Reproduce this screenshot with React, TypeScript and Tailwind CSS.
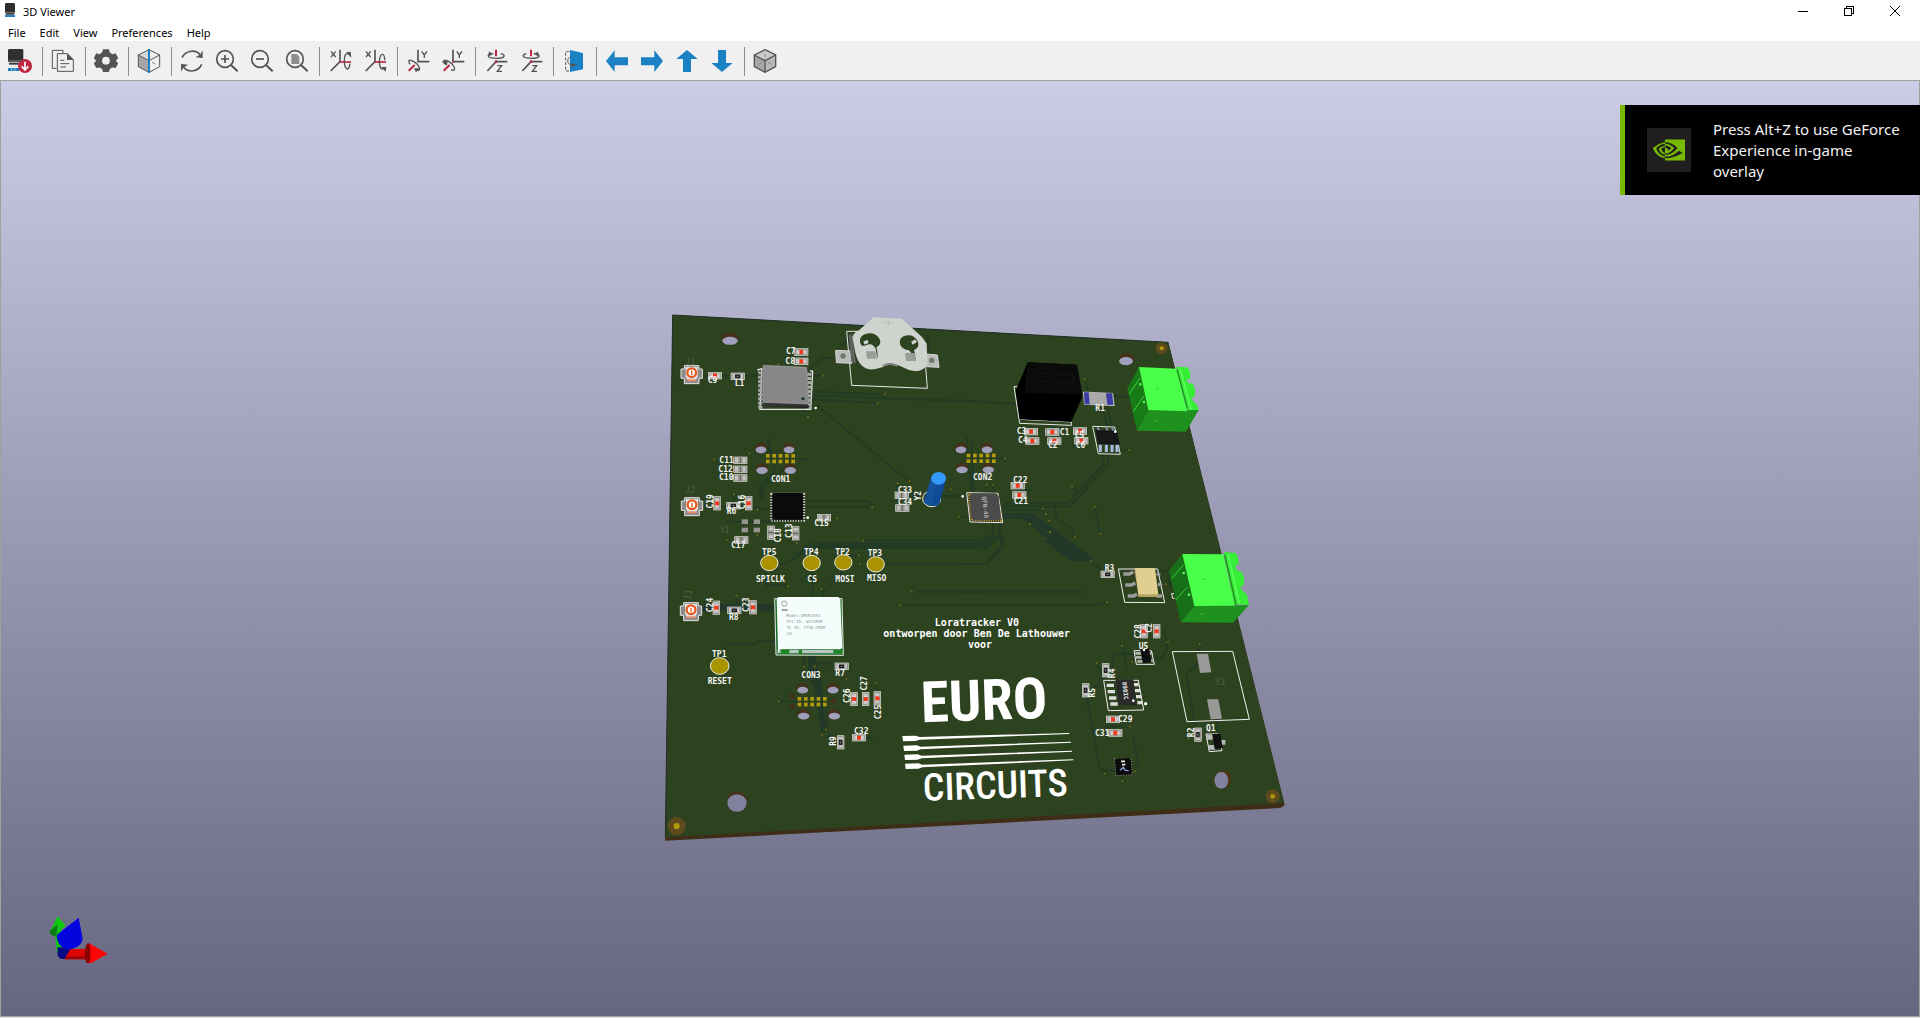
import React from "react";
import { SiNvidia } from "react-icons/si";

const INK = "#545454";
const RED = "#bf2641";
const BLUE = "#1a81c4";

/* ---------- toolbar icons (72-unit grid, shown at 24px) ---------- */

function Glyph({ children }: { children: React.ReactNode }) {
  return (
    <svg viewBox="0 0 72 72" className="size-6" aria-hidden="true" fill="none" stroke={INK} strokeWidth="5">
      {children}
    </svg>
  );
}

const Reload = () => (
  <Glyph>
    <g stroke="none">
      <path d="M3 0h40l3 3v32H0V3z" fill="#2f2f2f" />
      <path d="M0 35h46v4H0z" fill="#555" />
      <path d="M3 41h40v6H3z" fill="#3a3a3a" />
      <path d="M0 57h34v9H0z" fill={BLUE} />
      <path d="M9 48h2v18H9zM20 48h2v18h-2z" fill="#d8d8d8" />
      <circle cx="51" cy="51" r="21" fill={RED} />
    </g>
    <path d="M51 38v24M41 52l10 11 10-11" stroke="#fff" strokeWidth="5" />
  </Glyph>
);

const Copy = () => (
  <Glyph>
    <path d="M16 58H4V4h32v8" strokeWidth="3" />
    <path d="M19 14h30l18 18v35H19z" strokeWidth="3" fill="#f0f0f0" />
    <path d="M48 13l20 20H48z" fill={INK} stroke="none" />
    <path d="M28 34h12M28 44h27M28 54h17" strokeWidth="3" />
  </Glyph>
);

const Gear = () => (
  <Glyph>
    <g fill={INK} stroke="none">
      <path
        fillRule="evenodd"
        d="M27 1h18l3 10 8 5 10-3 8 16-8 7 8 8-8 15-11-2-7 5-3 9H27l-3-9-7-5-11 2-8-15 8-8-8-7 8-16 10 3 8-5zM36 24a12 12 0 1 0 0 24 12 12 0 0 0 0-24z"
        transform="translate(1 0) scale(.97)"
      />
    </g>
  </Glyph>
);

const CubeSplit = () => (
  <Glyph>
    <path d="M4 18L36 35V70L4 53z" fill="#a6a6a6" stroke="none" />
    <path d="M4 18L36 2v33z" fill="#d9d9d9" stroke="none" />
    <path d="M36 2l32 16v35L36 70 4 53V18z" strokeWidth="3" />
    <path d="M4 18l32 17 32-17" strokeWidth="3" />
    <path d="M45 40l10 5" strokeWidth="2" />
    <path d="M36 0v72" stroke={BLUE} strokeWidth="6" />
  </Glyph>
);

const Refresh = () => (
  <Glyph>
    <path d="M6 26C14 8 44 -2 60 17" />
    <path d="M65 46C57 66 26 74 11 55" />
    <path d="M68 4v23l-22-2 12-7 4-4zM3 68V45l22 2-12 7-4 4z" fill={INK} stroke="none" />
  </Glyph>
);

function Lens({ children }: { children: React.ReactNode }) {
  return (
    <Glyph>
      <circle cx="30" cy="30" r="25" strokeWidth="5" />
      <path d="M48 48l20 19" strokeWidth="6" />
      {children}
    </Glyph>
  );
}
const ZoomIn = () => (
  <Lens>
    <path d="M18 30h24M30 18v24" />
  </Lens>
);
const ZoomOut = () => (
  <Lens>
    <path d="M18 30h24" />
  </Lens>
);
const ZoomFit = () => (
  <Lens>
    <path d="M19 15h16l8 8v22H19z" fill="#8e8e8e" stroke="none" />
  </Lens>
);

function RotX({ flip }: { flip?: boolean }) {
  return (
    <Glyph>
      <path d="M9 7l14 17M23 7L9 24" strokeWidth="4" />
      <path d="M36 2v36L8 66" />
      <path d="M36 39h33" stroke={RED} />
      {flip ? (
        <>
          <path d="M65 34C65 12 52 8 49 36 49 52 53 62 60 60" strokeWidth="4" />
          <path d="M54 54h16l-2 14z" fill={INK} stroke="none" />
        </>
      ) : (
        <>
          <path d="M60 16C52 10 48 24 49 40 50 58 62 72 66 44" strokeWidth="4" />
          <path d="M54 10l14-2 2 18z" fill={INK} stroke="none" />
        </>
      )}
    </Glyph>
  );
}

function RotY({ flip }: { flip?: boolean }) {
  return (
    <Glyph>
      <path d="M36 2v36h34" />
      <path d="M47 7l8 11 8-11M55 18v9" strokeWidth="4" />
      <path d="M8 65l18-17" stroke={RED} strokeWidth="6" />
      <path d="M12 46C0 26 22 34 34 46 46 60 40 68 30 62" strokeWidth="4" />
      {flip ? (
        <path d="M2 38l18-6-2 18z" fill={INK} stroke="none" />
      ) : (
        <path d="M24 58l18 0-12 12z" fill={INK} stroke="none" />
      )}
      {flip && <circle cx="36" cy="39" r="3" fill={RED} stroke="none" />}
    </Glyph>
  );
}

function RotZ({ flip }: { flip?: boolean }) {
  return (
    <Glyph>
      <path d="M10 66l26-28h34" />
      <path d="M36 2v20M36 34v8" stroke={RED} strokeWidth="6" />
      <path d="M40 50h13L40 67h14" strokeWidth="4" />
      <path d="M22 14C2 20 16 28 38 28 62 28 68 18 50 14" strokeWidth="4" />
      {flip ? (
        <path d="M42 14l16-6v14z" fill={INK} stroke="none" />
      ) : (
        <path d="M30 14L14 8v14z" fill={INK} stroke="none" />
      )}
    </Glyph>
  );
}

const Ortho = () => (
  <Glyph>
    <path d="M22 8H11v58h11" strokeWidth="3" strokeDasharray="9 5" />
    <path d="M24 3l39 9v49l-39 8z" fill={BLUE} stroke="none" />
    <path d="M26 24C14 26 14 46 28 48" strokeWidth="3" />
    <path d="M26 42l18 5-16 9z" fill={INK} stroke="none" />
  </Glyph>
);

const ARROWS = {
  left: "M3 36L29 4v21h40v24H29v20z",
  right: "M69 36L43 4v21H3v24h40v20z",
  up: "M36 3L4 30h20v39h24V30h20z",
  down: "M36 69L4 42h20V3h24v39h20z",
};
const Arrow = ({ dir }: { dir: keyof typeof ARROWS }) => (
  <Glyph>
    <path d={ARROWS[dir]} fill={BLUE} stroke="none" />
  </Glyph>
);

const Cube = () => (
  <Glyph>
    <path d="M4 18L36 2l32 16-32 17z" fill="#c9c9c9" stroke="none" />
    <path d="M4 18l32 17v35L4 53z" fill="#a6a6a6" stroke="none" />
    <path d="M68 18L36 35v35l32-17z" fill="#b8b8b8" stroke="none" />
    <path d="M36 2l32 16v35L36 70 4 53V18z" strokeWidth="4" />
    <path d="M4 18l32 17 32-17M36 35v35" strokeWidth="4" />
    <path d="M36 14v10M17 46l9-5M46 41l9 5" stroke="#868686" strokeWidth="3" />
  </Glyph>
);

const GROUPS: [string, React.ReactNode][][] = [
  [["Reload board", <Reload />]],
  [["Copy 3D image to clipboard", <Copy />]],
  [["Set display options", <Gear />]],
  [["Render view using raytracing", <CubeSplit />]],
  [
    ["Refresh view", <Refresh />],
    ["Zoom in", <ZoomIn />],
    ["Zoom out", <ZoomOut />],
    ["Fit in page", <ZoomFit />],
  ],
  [
    ["Rotate X clockwise", <RotX />],
    ["Rotate X counterclockwise", <RotX flip />],
  ],
  [
    ["Rotate Y clockwise", <RotY />],
    ["Rotate Y counterclockwise", <RotY flip />],
  ],
  [
    ["Rotate Z clockwise", <RotZ />],
    ["Rotate Z counterclockwise", <RotZ flip />],
  ],
  [["Flip board view", <Ortho />]],
  [
    ["Move left", <Arrow dir="left" />],
    ["Move right", <Arrow dir="right" />],
    ["Move up", <Arrow dir="up" />],
    ["Move down", <Arrow dir="down" />],
  ],
  [["Orthographic projection", <Cube />]],
];

/* ---------- board drawing (3 units per pixel) ---------- */

type Kind = "red" | "gray" | "res";

function Chip({ x, y, kind = "red", v }: { x: number; y: number; kind?: Kind; v?: boolean }) {
  const mid = kind === "red" ? "#e6e6e6" : kind === "gray" ? "#a2a29a" : "#1f1f1f";
  return (
    <g transform={`translate(${x} ${y})${v ? " rotate(90)" : ""}`}>
      <rect x="-20" y="-10" width="40" height="20" fill="#8d8f86" stroke="#dededa" strokeWidth="2" />
      <rect x="-16" y="-7" width="10" height="14" fill="#c4c4c4" />
      <rect x="6" y="-7" width="10" height="14" fill="#c4c4c4" />
      <rect x="-8" y="-5" width="16" height="10" fill={mid} />
      {kind === "red" && <rect x="-6" y="-6" width="12" height="12" fill="#f5371c" />}
      {kind === "gray" && <path d="M0-8V8" stroke="#5d5d50" strokeWidth="3" />}
      {kind === "res" && <path d="M-3 0h6" stroke="#8a8a8a" strokeWidth="3" />}
    </g>
  );
}

function Label({ x, y, t, up }: { x: number; y: number; t: string; up?: boolean }) {
  return up ? (
    <text transform={`translate(${x + 9} ${y}) rotate(-90)`} textAnchor="middle" className="text-[24px]">
      {t}
    </text>
  ) : (
    <text x={x} y={y} className="text-[24px]">
      {t}
    </text>
  );
}

function Hole({ x, y, rx, ry, dx = 0 }: { x: number; y: number; rx: number; ry: number; dx?: number }) {
  return (
    <g>
      <ellipse cx={x} cy={y} rx={rx} ry={ry} fill="#45311a" />
      <ellipse cx={x + dx} cy={y + ry * 0.34} rx={rx * 0.9} ry={ry * 0.64} fill="#a09fbc" />
    </g>
  );
}

function Coax({ x, y }: { x: number; y: number }) {
  return (
    <g transform={`translate(${x} ${y})`}>
      <path d="M-22-25h44v10h10v28H22v16h-44V13h-10v-28h10z" fill="#8b8b8b" stroke="#e6e6e6" strokeWidth="3" />
      <path d="M-18-21h36v30l-6 8h-24l-6-8z" fill="#e2e2e2" />
      <circle cx="0" cy="-4" r="13" fill="#fff" stroke="#ea5a1e" strokeWidth="7" />
      <path d="M0-10V3" stroke="#ea5a1e" strokeWidth="4" />
      <path d="M-14 19h28" stroke="#f08a60" strokeWidth="5" />
    </g>
  );
}

function TestPad({ x, y, r = 26 }: { x: number; y: number; r?: number }) {
  return <ellipse cx={x} cy={y} rx={r} ry={r - 3} fill="#a99300" stroke="#e9e9e0" strokeWidth="3" />;
}

function Header({ x, y, w, h, sx }: { x: number; y: number; w: number; h: number; sx: number }) {
  return (
    <g>
      <Hole x={x} y={y} rx={18} ry={16} dx={1} />
      <Hole x={x + w} y={y} rx={18} ry={16} dx={1} />
      <Hole x={x + 3} y={y + h} rx={19} ry={16} dx={1} />
      <Hole x={x + w + 4} y={y + h} rx={19} ry={16} dx={1} />
      {[0, 1, 2, 3, 4].map((i) => (
        <g key={i} fill="#b39b10">
          <rect x={x + sx + i * 19} y={y + h / 2 - 13} width="11" height="11" />
          <rect x={x + sx + i * 19} y={y + h / 2 + 4} width="11" height="11" />
        </g>
      ))}
    </g>
  );
}

function Mount({ x, y, r }: { x: number; y: number; r: number }) {
  return (
    <g>
      <circle cx={x} cy={y} r={r} fill="#5f4a1e" stroke="#7b5f28" strokeWidth="2" strokeDasharray="3 4" />
      <circle cx={x} cy={y} r={r * 0.36} fill="#b09a0c" />
    </g>
  );
}

function Terminal() {
  return (
    <g>
      <path d="M537 171l-35 64 28 124 35-59z" fill="#177b17" />
      <path d="M565 300l-35 62 148 3 38-65z" fill="#1f911f" />
      <path d="M537 171l112 5 32 128-116-4z" fill="#4aff4a" />
      <path d="M649 170l34 2 8 16-1 20-9-1 3 12 15 2 6 18-1 22-11 2 4 8 14 14 5 15-35-1z" fill="#36ee36" />
      <path d="M651 178l31 118" stroke="#1d8a1d" strokeWidth="4" />
      <path d="M660 176l34 124" stroke="#5cff5c" strokeWidth="5" />
      <path d="M508 252l32-48M520 304l32-46" stroke="#3cd03c" strokeWidth="3" />
      <circle cx="541" cy="223" r="4" fill="#4aff4a" />
      <circle cx="552" cy="276" r="4" fill="#4aff4a" />
      <path d="M588 236h8M584 333l9-2" stroke="#39c639" strokeWidth="3" />
    </g>
  );
}

const VIAS_A = [[355, 163], [488, 197], [674, 252], [653, 280], [444, 321], [162, 448], [268, 430], [748, 514], [222, 553], [532, 625], [637, 592], [201, 689], [410, 699], [610, 692], [872, 538], [897, 620], [292, 600], [291, 676], [713, 520]];
const VIAS_B = [[374, 208], [508, 420], [135, 445], [80, 524], [99, 524], [336, 530], [249, 596], [258, 612], [268, 632], [209, 643], [270, 666], [344, 682], [404, 590], [421, 672]];
const VIAS_C = [[385, 138], [484, 147], [596, 45], [600, 73], [755, 155], [721, 196], [229, 167], [94, 156], [433, 381], [464, 380], [559, 416], [356, 484], [486, 584], [498, 569], [648, 430]];
const VIAS_D = [[393, 64], [441, 187], [486, 317], [410, 369], [517, 366], [624, 306], [719, 312], [510, 560], [434, 701], [487, 723], [686, 596], [526, 694], [617, 133]];

function Vias({ at }: { at: number[][] }) {
  return (
    <g fill="#6a621a" stroke="#263d20" strokeWidth="3">
      {at.map(([x, y]) => (
        <circle key={`${x}-${y}`} cx={x} cy={y} r="5" />
      ))}
    </g>
  );
}

function Board() {
  return (
    <svg
      viewBox="1860 744 2040 1803"
      className="h-[601px] w-[680px] shrink-0 font-['DejaVu_Sans_Mono',monospace] font-bold"
      role="img"
      aria-label="Loratracker V0 circuit board"
    >
      <path d="M2018 945l-22 1565v12l1845-98 13-8-2-10L3505 1027z" fill="#3f2e17" />
      <path d="M2018 945l-22 1567 1856-103L3505 1027z" fill="#2d421e" />
      <path d="M2018 945l-22 1567M2018 945l1487 82" stroke="#22312b" strokeWidth="3" />

      {/* upper left */}
      <g transform="translate(1980 930)">
        <g fill="none" stroke="#223b25" strokeWidth="6" strokeLinejoin="round">
          <path d="M130 197h160M445 197h43M450 178l35-33 45-3M455 245l215 8M455 256l250 10 255 8M455 268l200 12" />
          <path d="M470 285l275 228M325 385v80M325 385l20 100-45 40v40M380 470l-72 60v40M415 448h30M135 592h170M285 598h50M435 574h190l18 12M435 590h200M198 635h145" />
          <path d="M545 105l30-30M800 75l12 60M920 380l14 160M935 390l6 160M715 520v60M740 558h170M222 556v30M410 660v36" />
          <path d="M400 750l60-50h500M470 710h490M610 690h350" />
        </g>
        <Vias at={VIAS_A} />
        <Hole x={210} y={86} rx={26} ry={19} />
        <Coax x={95} y={192} />
        <Coax x={96} y={588} />
        <Chip x={165} y={197} />
        <Chip x={233} y={199} kind="res" />
        <Chip x={424} y={126} />
        <Chip x={424} y={154} />
        <g>
          <path d="M292 180l14-4-6 122h152l6-114-8-2" fill="none" stroke="#e6e6e6" strokeWidth="4" />
          <path d="M301 184v112M448 188v108" stroke="#a9a9a9" strokeWidth="13" strokeDasharray="9 4" />
          <path d="M308 166l132 8 5 120-135-6z" fill="#18201c" />
          <path d="M308 276h137v14H308z" fill="#333" />
          <path d="M309 166l131 6 6 110-137-5z" fill="#878787" stroke="#a4a4a4" strokeWidth="2" />
          <circle cx="429" cy="266" r="5" fill="#173a2c" />
          <circle cx="467" cy="294" r="4" fill="#fff" />
        </g>
        <g>
          <path d="M562 64h-2l15 162 227 9-10-128M562 64h50" fill="none" stroke="#e9e9e9" strokeWidth="3" />
          <path d="M527 121l43 2 6 37-47-2zM800 132l32 3 5 37-37-2z" fill="#b9bbb9" stroke="#d6d8d6" strokeWidth="3" />
          <circle cx="549" cy="138" r="8" fill="#6f786c" />
          <circle cx="815" cy="151" r="8" fill="#6f786c" />
          <path d="M566 76l10-4 12 88-14-4z" fill="#5f625f" />
          <path
            fillRule="evenodd"
            d="M641 22l85 4 60 55 14 20 2 60c-8 20-30 26-52 20-20-6-28-16-50-18-24 0-30 12-60 15-30 2-46-18-54-50l-9-47c8-16 14-16 20-20zM630 70c-20 0-32 12-30 26 2 12 10 14 18 10 14-8 26 0 30 14l4 26c2-8 0-24-3-34 16-8 14-20 6-30-6-8-14-12-25-12zM745 76c-18 0-28 12-25 26 4 12 16 18 26 18 8 8 18 18 20 36 2-12-2-28-4-36 14-6 16-16 10-28-6-10-14-16-27-16z"
            fill="#cfd3ce"
          />
          <path d="M618 124h28l5 22h-30zM735 129h28l5 24h-30z" fill="#9a9e99" />
          <path d="M612 100l12-6M756 100l12-8" stroke="#cfd3ce" strokeWidth="10" />
          <path d="M670 38h30M685 26v22" stroke="#b4b8b3" strokeWidth="2" />
          <path d="M668 168c14-8 30-8 44 0" stroke="#7d807d" strokeWidth="6" fill="none" />
        </g>
        <Header x={302} y={414} w={84} h={62} sx={16} />
        <Chip x={241} y={451} kind="gray" />
        <Chip x={241} y={478} kind="gray" />
        <Chip x={241} y={504} kind="gray" />
        <Chip x={171} y={580} v />
        <Chip x={266} y={580} v />
        <Chip x={220} y={587} kind="res" />
        <Chip x={492} y={623} kind="gray" />
        <Chip x={333} y={668} kind="gray" v />
        <Chip x={407} y={670} kind="gray" v />
        <Chip x={244} y={690} kind="gray" />
        <g fill="#95968f">
          <rect x="245" y="628" width="19" height="14" />
          <rect x="281" y="628" width="19" height="14" />
          <rect x="245" y="653" width="19" height="14" />
          <rect x="281" y="653" width="19" height="14" />
        </g>
        <rect x="334" y="552" width="98" height="80" fill="#0b0b0b" stroke="#c5c5c5" strokeWidth="7" strokeDasharray="4 4" />
        <rect x="338" y="549" width="90" height="80" fill="#0b0b0b" />
        <circle cx="443" cy="623" r="4" fill="#fff" />
        <Chip x={725} y={556} kind="gray" />
        <Chip x={727} y={594} kind="gray" />
        <ellipse cx="815" cy="566" rx="27" ry="24" fill="#24402a" stroke="#f2f2f2" strokeWidth="3" />
        <path d="M814 500l44 8-20 74c-8 10-38 6-46-6z" fill="#0f4a96" />
        <path d="M814 500l22 4-22 82c-10 0-18-4-22-10z" fill="#14549f" />
        <ellipse cx="836" cy="505" rx="22" ry="19" fill="#3399fb" />
        <g fill="#f4f4f4">
          <Label x={378} y={133} t="C7" />
          <Label x={376} y={161} t="C8" />
          <Label x={143} y={218} t="C9" />
          <Label x={224} y={229} t="L1" />
          <Label x={178} y={458} t="C11" />
          <Label x={175} y={485} t="C12" />
          <Label x={177} y={511} t="C10" />
          <Label x={333} y={515} t="CON1" />
          <Label x={200} y={613} t="R6" />
          <Label x={713} y={550} t="C33" />
          <Label x={713} y={586} t="C34" />
          <Label x={463} y={648} t="C15" />
          <Label x={213} y={714} t="C17" />
          <Label x={150} y={574} t="C19" up />
          <Label x={247} y={576} t="C16" up />
          <Label x={353} y={676} t="C18" up />
          <Label x={388} y={662} t="C13" up />
          <Label x={775} y={557} t="Y2" up />
        </g>
        <g fill="#506046" className="font-normal">
          <Label x={76} y={164} t="J1" />
          <Label x={76} y={550} t="J2" />
          <Label x={180} y={669} t="Y1" />
        </g>
      </g>

      {/* upper right */}
      <g transform="translate(2880 930)">
        <g fill="none" stroke="#223b25" strokeWidth="6" strokeLinejoin="round">
          <path d="M0 272l170 10M430 296l12 60M444 296l12 60M430 430v34L322 580H130M444 430v34L330 590H130M0 620h20" />
          <path d="M460 260h50M374 208l10 30M280 330v60M460 420h48M90 445h45M130 600h110l20 15M285 590l4 34 50 36v22M404 590l16 80M336 530l16 14" />
          <path d="M100 640v30l-30 34H0M120 640v34l-38 40H0M126 680l4 30-40 40M80 524v26M99 524v26M180 540h35M335 412l14-20" />
        </g>
        <path d="M130 610h90l185 140h-65L190 626h-60z" fill="#22392a" />
        <path d="M130 600h100l190 150M130 618h74l150 132" stroke="#2c4427" strokeWidth="2" fill="none" />
        <Vias at={VIAS_B} />
        <Mount x={605} y={115} r={17} />
        <Hole x={500} y={147} rx={23} ry={19} dx={-2} />
        <path d="M162 230h10l10 98 152 8v10l-155-6z" fill="none" stroke="#e8e8e8" strokeWidth="3" />
        <path d="M203 157l148 7 16 96-33 76-155-8-12-86z" fill="#000" />
        <path d="M203 157l148 7 16 90-174-6z" fill="#0b0b0b" />
        <path d="M232 190l105 5 4 24-107-5z" fill="none" stroke="#131313" strokeWidth="3" />
        <path d="M370 246l88 4 5 37-90-4z" fill="#a9a9a9" stroke="#cfcfcf" strokeWidth="2" />
        <path d="M372 247h14l3 36h-15zM438 250h18l4 34h-18z" fill="#3c3ca6" />
        <Chip x={213} y={365} />
        <Chip x={277} y={366} />
        <Chip x={217} y={393} />
        <Chip x={283} y={393} />
        <Chip x={360} y={363} />
        <Chip x={364} y={392} />
        <path d="M398 349l66 2 17 82-66-2z" fill="none" stroke="#e8e8e8" strokeWidth="3" />
        <path d="M412 352l8 14M438 352l6 12M456 354l6 12" stroke="#8ea0c0" strokeWidth="5" />
        <path d="M421 404v22M439 404v22M456 404v22M471 404v22" stroke="#a9bde0" strokeWidth="9" />
        <path d="M406 360l64 2 10 42-66-2z" fill="#17171a" />
        <circle cx="466" cy="365" r="4" fill="#fff" />
        <Terminal />
        <Chip x={173} y={527} />
        <Chip x={178} y={555} />
        <Header x={2} y={414} w={78} h={60} sx={18} />
        <path d="M20 548l94 2 14 88-98-2z" fill="#3a3a30" stroke="#e8e8e8" strokeWidth="3" />
        <path d="M26 554l86 2 10 76-88-2z" fill="none" stroke="#c8a232" strokeWidth="6" strokeDasharray="3 4" />
        <path d="M30 558l8-8h70l8 8 6 64-10 8H44l-10-8z" fill="#4b4b4b" />
        <text transform="translate(66 560) rotate(84)" className="text-[18px] font-normal" fill="#dcdcdc">
          QFN-48
        </text>
        <circle cx="8" cy="559" r="4" fill="#fff" />
        <g fill="#f4f4f4">
          <Label x={170} y={373} t="C3" />
          <Label x={174} y={400} t="C4" />
          <Label x={299} y={375} t="C1" />
          <Label x={264} y={414} t="C2" />
          <Label x={344} y={384} t="C5" />
          <Label x={347} y={414} t="C6" />
          <Label x={406} y={304} t="R1" />
          <Label x={39} y={511} t="CON2" />
          <Label x={159} y={520} t="C22" />
          <Label x={161} y={583} t="C21" />
        </g>
      </g>

      {/* lower left */}
      <g transform="translate(1980 1620)">
        <g fill="none" stroke="#223b25" strokeWidth="6" strokeLinejoin="round">
          <path d="M350 70h34l60-54h516M318 90v46h66M458 95v75M550 95l-60 60v16M560 46h36M640 73h320M755 155h205M721 196h239M229 167v40M445 24h515" />
          <path d="M130 205h220M180 345l30-32h70l20-10h50M433 345v40M350 484h60M648 430v60M486 500v84M500 500v70l20 30M600 593h40M460 370h50l20 16" />
        </g>
        <path d="M120 192h226v22H120zM444 345h18l22 70 12 160h-12L462 440l-18-40z" fill="#22392a" />
        <Vias at={VIAS_C} />
        <TestPad x={328} y={69} />
        <TestPad x={455} y={69} />
        <TestPad x={550} y={67} />
        <TestPad x={647} y={73} />
        <TestPad x={179} y={378} r={28} />
        <Coax x={93} y={213} />
        <Chip x={169} y={203} v />
        <Chip x={223} y={211} kind="res" />
        <Chip x={279} y={202} v />
        <path d="M344 176h202l4 170-202-1z" fill="#1c6b22" stroke="#e8e8e8" strokeWidth="3" />
        <path d="M352 330h196v10H352z" fill="#b9c6c4" />
        <path d="M362 330h26v12h-26zM416 330h10v12h-10zM520 330h28v10h-28z" fill="#1b8724" />
        <path d="M350 176l6-5h180l5 8 6 146-8 3H362l-8 4z" fill="#f4fdfc" />
        <circle cx="373" cy="191" r="8" fill="none" stroke="#777" strokeWidth="2" />
        <path d="M365 210h18" stroke="#777" strokeWidth="4" />
        <g fill="#8d9696" className="text-[12px] font-normal">
          <text x="379" y="230">Model:GMXR1052</text>
          <text x="380" y="248">FCC ID: WXYCMXR</text>
          <text x="380" y="267">IC ID: 7738-CMXR</text>
          <text x="381" y="286">GS</text>
        </g>
        <Chip x={545} y={379} kind="res" />
        <Header x={427} y={445} w={91} h={78} sx={-14} />
        <circle cx="397" cy="469" r="8" fill="#45311a" />
        <circle cx="397" cy="500" r="8" fill="#45311a" />
        <circle cx="521" cy="482" r="8" fill="#45311a" />
        <Chip x={582} y={477} v />
        <Chip x={617} y={477} v />
        <Chip x={652} y={475} v />
        <Chip x={597} y={593} />
        <Chip x={542} y={607} kind="res" v />
        <ellipse cx="232" cy="785" rx="31" ry="31" fill="#45311a" />
        <ellipse cx="231" cy="789" rx="29" ry="26" fill="#8281a0" />
        <Mount x={50} y={858} r={26} />
        <g fill="#f4f4f4">
          <Label x={306} y={45} t="TP5" />
          <Label x={432} y={45} t="TP4" />
          <Label x={526} y={44} t="TP2" />
          <Label x={623} y={49} t="TP3" />
          <Label x={288} y={127} t="SPICLK" />
          <Label x={442} y={125} t="CS" />
          <Label x={526} y={125} t="MOSI" />
          <Label x={621} y={124} t="MISO" />
          <Label x={156} y={351} t="TP1" />
          <Label x={143} y={431} t="RESET" />
          <Label x={207} y={241} t="R8" />
          <Label x={149} y={195} t="C24" up />
          <Label x={258} y={194} t="C23" up />
          <Label x={526} y={407} t="R7" />
          <Label x={424} y={415} t="CON3" />
          <Label x={560} y={467} t="C26" up />
          <Label x={613} y={430} t="C27" up />
          <Label x={655} y={516} t="C25" up />
          <Label x={582} y={582} t="C32" />
          <Label x={520} y={603} t="R9" up />
        </g>
        <g fill="#506046" className="font-normal">
          <Label x={84} y={165} t="J3" up />
        </g>
      </g>

      {/* lower right */}
      <g transform="translate(2880 1620)">
        <g fill="none" stroke="#223b25" strokeWidth="6" strokeLinejoin="round">
          <path d="M0 155h373M0 196h400l40-8M0 12h60l22-24M0 24h70l30-30 18-4 10 24-50 58H0M393 64l40 32M595 92h34v48M610 270l12 36-4 30-14 16h-20" />
          <path d="M457 400v-50l10-8h60M486 317l14 66M410 369l24 60M400 440h30M380 470l38 210 10 12h40M520 590l16 90h-20M434 560h70M487 700v20" />
          <path d="M715 370l-36 34 30 180-20 12M768 540l6 46M719 312v30" />
        </g>
        <path d="M250 0h60l84 64h-60z" fill="#22392a" />
        <Vias at={VIAS_D} />
        <Chip x={443} y={103} kind="res" />
        <path d="M475 87h118l21 101-120-1z" fill="none" stroke="#f0f0f0" strokeWidth="3" />
        <path d="M490 102h18l12-6M496 135h18l12-6M503 168h18l10-6M590 100l10 6M594 132l12 4M590 168h16" stroke="#9c9c9c" strokeWidth="10" fill="none" />
        <path d="M522 87l14 78v6h56l2-8z" fill="#a8925e" />
        <path d="M525 84h60l10 80-60 1z" fill="#dfd08f" />
        <path d="M534 163h60v8h-58z" fill="#b8a363" />
        <path d="M642 161h-7l3 14h6" fill="none" stroke="#f0f0f0" strokeWidth="3" />
        <g transform="translate(126 -135)">
          <path d="M541 177l-40 50 34 152 42-47z" fill="#176f17" />
          <path d="M577 332l-42 50 158 1 48-53z" fill="#1f911f" />
          <path d="M541 177l123 1 34 154-121 1z" fill="#4aff4a" />
          <path d="M666 171l36 3 7 16 1 20-10 1 4 15 16 6 6 17 0 22-10 2 3 12 16 14 6 30-44-1z" fill="#36ee36" />
          <path d="M668 180l34 148" stroke="#1d8a1d" strokeWidth="4" />
          <path d="M678 178l34 148" stroke="#5cff5c" strokeWidth="5" />
          <path d="M508 252l36-42M520 316l36-40" stroke="#3cd03c" strokeWidth="3" />
          <circle cx="545" cy="234" r="4" fill="#4aff4a" />
          <circle cx="561" cy="299" r="4" fill="#4aff4a" />
          <path d="M600 253h9M595 358l10-1" stroke="#39c639" strokeWidth="3" />
        </g>
        <Chip x={552} y={274} v />
        <Chip x={590} y={274} v />
        <path d="M522 332h52l9 41h-54z" fill="none" stroke="#f0f0f0" strokeWidth="3" />
        <path d="M526 340h18M528 352h18M532 364h18M568 340h10M572 362h10" stroke="#b4b4b4" strokeWidth="8" />
        <path d="M541 328l26-4 7 42-26 4z" fill="#101010" />
        <circle cx="552" cy="330" r="4" fill="#fff" />
        <Chip x={437} y={391} kind="res" v />
        <Chip x={377} y={451} kind="res" v />
        <path d="M431 421h104l16 89-106 2z" fill="none" stroke="#f0f0f0" strokeWidth="3" />
        <path d="M440 436h22M443 455h22M447 474h22M451 492h22M520 434h16M524 452h16M528 470h16M532 488h16" stroke="#dedede" strokeWidth="10" />
        <path d="M466 418h54l10 78h-52z" fill="#2a2a2a" />
        <text transform="translate(487 426) rotate(84)" className="text-[18px]" fill="#f0f0f0">
          89DIC
        </text>
        <circle cx="520" cy="482" r="4" fill="#fff" />
        <circle cx="557" cy="491" r="5" fill="#fff" />
        <path d="M637 335l181-1 50 204-187 7z" fill="none" stroke="#f0f0f0" strokeWidth="3" />
        <path d="M710 341h34l10 56-34 2zM741 478h34l11 58-34 2z" fill="#999a98" />
        <Chip x={459} y={538} />
        <Chip x={466} y={579} />
        <Chip x={714} y={584} kind="res" v />
        <path d="M738 582h38l10 50-38 3z" fill="none" stroke="#f0f0f0" strokeWidth="3" />
        <path d="M738 592h20M746 622h20M778 607h18" stroke="#b9b9b9" strokeWidth="14" />
        <path d="M757 582h24l7 42-24 3z" fill="#101010" />
        <path d="M464 656l50 2 2 46-48 2z" fill="#0a0a0a" stroke="#dcdcdc" strokeWidth="3" strokeDasharray="2 6" />
        <path d="M466 656l44-2 5 48-46 2z" fill="#0a0a0a" />
        <path d="M483 664h12M486 674h10" stroke="#e8e8e8" strokeWidth="5" fill="none" />
        <path d="M480 691l10-9 6 9 10 1" stroke="#8fa3d8" strokeWidth="4" fill="none" />
        <ellipse cx="789" cy="718" rx="26" ry="27" fill="#4a3518" />
        <ellipse cx="784" cy="721" rx="21" ry="25" fill="#8281a0" />
        <Mount x={938} y={769} r={20} />
        <g fill="#f4f4f4">
          <Label x={434} y={94} t="R3" />
          <Label x={533} y={274} t="C28" up />
          <Label x={568} y={264} t="C2" up />
          <Label x={536} y={326} t="U5" />
          <Label x={456} y={400} t="R4" up />
          <Label x={397} y={458} t="R5" up />
          <Label x={474} y={546} t="C29" />
          <Label x={405} y={588} t="C31" />
          <Label x={692} y={577} t="R2" up />
          <Label x={738} y={574} t="Q1" />
        </g>
        <g fill="#506046" className="font-normal">
          <Label x={766} y={436} t="Y3" />
        </g>
      </g>

      {/* silkscreen title and logo */}
      <g transform="translate(2610 1830)" fill="#fff">
        <g className="text-[30px]" textAnchor="middle">
          <text x="321" y="49">Loratracker V0</text>
          <text x="320" y="82">ontworpen door Ben De Lathouwer</text>
          <text x="330" y="114">voor</text>
        </g>
        <text
          transform="translate(344 330) rotate(-2)"
          textAnchor="middle"
          className="font-['Roboto_Condensed','Liberation_Sans_Narrow','DejaVu_Sans_Condensed',sans-serif] text-[171px] font-bold"
        >
          EURO
        </text>
        {[
          [97, 385, 598, 371],
          [100, 414, 603, 397],
          [103, 441, 606, 424],
          [105, 468, 610, 450],
        ].map(([x, y, x2, y2]) => (
          <path key={y} d={`M${x} ${y - 7}l40-1 12 4L${x2} ${y2 - 2}v3L${x + 52} ${y + 4}l-12 4-38 1z`} />
        ))}
        <text
          transform="translate(377 565) rotate(-2)"
          textAnchor="middle"
          className="font-['Roboto_Condensed','Liberation_Sans_Narrow','DejaVu_Sans_Condensed',sans-serif] text-[114px] font-medium"
        >
          CIRCUITS
        </text>
      </g>
    </svg>
  );
}

function Axes() {
  return (
    <svg viewBox="0 0 180 150" className="absolute bottom-[53px] left-[47px] h-[50px] w-[60px]" aria-hidden="true">
      <g transform="translate(-55 -70)">
        <path d="M84 80l24 28-14 12 2 70-14-2-6-55-16-5z" fill="#0ecb12" />
        <path d="M60 124l24-20-4 34c-12 2-20-4-20-14z" fill="#0a7d10" />
        <path d="M112 178h64v31h-70z" fill="#e00505" />
        <path d="M106 200h70v9h-72z" fill="#a30303" />
        <ellipse cx="176" cy="193" rx="11" ry="32" fill="#8c0202" />
        <path d="M178 161l56 31-56 32c6-16 6-46 0-63z" fill="#fb0606" />
        <path d="M84 172l40 4-20 32c-10 2-22-6-20-16z" fill="#0a0a86" />
        <path d="M147 84l12 64c-4 20-24 32-44 30-22-2-34-20-34-42z" fill="#0404dc" />
      </g>
    </svg>
  );
}

/* ---------- window ---------- */

export default function App() {
  return (
    <div className="relative flex h-screen flex-col bg-white font-['Noto_Sans','Open_Sans',sans-serif] text-[11px] text-black">
      <header className="flex h-6 shrink-0 items-start">
        <svg viewBox="0 0 30 42" className="mt-[3px] ml-[5px] h-[14px] w-[10px]" aria-hidden="true">
          <path d="M2 0h26l2 3v24H0V3z" fill="#2f2f2f" />
          <path d="M0 27h30v3H0z" fill="#777" />
          <path d="M2 30h26v5H2z" fill="#333" />
          <path d="M0 36h30v6H0z" fill={BLUE} />
        </svg>
        <h1 className="ml-2 leading-6">3D Viewer</h1>
        <div className="mr-[2px] ml-auto flex">
          <button aria-label="Minimize" className="grid h-[21px] w-[46px] place-items-center">
            <svg viewBox="0 0 10 10" className="size-[10px]" stroke="#000" shapeRendering="crispEdges">
              <path d="M0 5.5h10" />
            </svg>
          </button>
          <button aria-label="Restore" className="grid h-[21px] w-[46px] place-items-center">
            <svg viewBox="0 0 10 10" className="size-[10px]" stroke="#000" fill="none" shapeRendering="crispEdges">
              <path d="M.5 2.5h7v7h-7zM2.5 2.5v-2h7v7h-2" />
            </svg>
          </button>
          <button aria-label="Close" className="grid h-[21px] w-[46px] place-items-center">
            <svg viewBox="0 0 10 10" className="size-[10px]" stroke="#000">
              <path d="M0 0l10 10M10 0L0 10" />
            </svg>
          </button>
        </div>
      </header>

      <nav className="flex h-[17px] shrink-0 gap-[14px] pl-2 leading-[17px]" aria-label="Menu">
        {["File", "Edit", "View", "Preferences", "Help"].map((m) => (
          <button key={m}>{m}</button>
        ))}
      </nav>

      <div role="toolbar" className="flex h-10 shrink-0 border-b border-[#a0a0a0] bg-[#f0f0f0] pl-[3px]">
        {GROUPS.map((group, i) => (
          <React.Fragment key={i}>
            {i > 0 && <span className="mt-[6px] mr-[3px] ml-[4px] h-[29px] w-px bg-[#8c8c8c]" />}
            {group.map(([label, icon]) => (
              <button key={label} aria-label={label} title={label} className="h-[39px] w-[35px] pt-[1px] pl-[5px]">
                {icon}
              </button>
            ))}
          </React.Fragment>
        ))}
      </div>

      <main className="relative flex min-h-0 flex-1 items-center justify-center overflow-hidden border-x border-b border-[#a0a0a0] bg-linear-to-b from-[#cccce6] to-[#666680]">
        <Board />
        <Axes />
      </main>
      <footer className="h-px shrink-0 bg-[#e3e3e3]" />

      <aside className="absolute top-[105px] right-0 flex h-[90px] w-[300px] items-center border-l-[5px] border-[#76b900] bg-black pl-[22px] text-[#f2f2f2]">
        <span className="grid size-11 shrink-0 place-items-center bg-[#1f1f1f]">
          <SiNvidia className="size-8 text-[#76b900]" />
        </span>
        <p className="ml-[22px] w-[192px] text-[15px] leading-[21px]">Press Alt+Z to use GeForce Experience in-game overlay</p>
      </aside>
    </div>
  );
}
